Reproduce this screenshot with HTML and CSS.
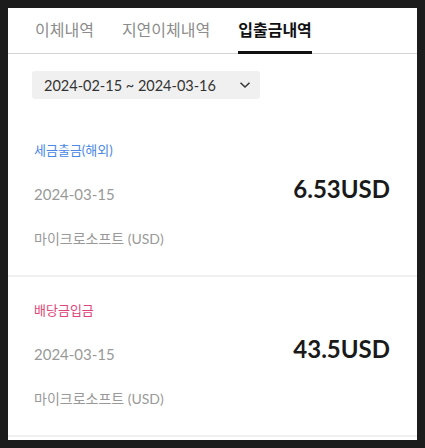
FILE: index.html
```html
<!DOCTYPE html>
<html lang="ko">
<head>
<meta charset="utf-8">
<link rel="stylesheet" href="styles.css">
</head>
<body>
<div class="panel">
  <nav class="tabs">
    <span class="tab">이체내역</span>
    <span class="tab">지연이체내역</span>
    <span class="tab active">입출금내역</span>
  </nav>
  <div class="filter">
    <button class="range">
      <span>2024-02-15 ~ 2024-03-16</span>
      <svg class="chev" width="12" height="8" viewBox="0 0 12 8"><path d="M1.5 1.8l4.5 4.2 4.5-4.2" fill="none" stroke="#333" stroke-width="1.5"/></svg>
    </button>
  </div>
  <div class="card">
    <div class="type out">세금출금(해외)</div>
    <div class="row">
      <span class="date">2024-03-15</span>
      <span class="amount">6.53USD</span>
    </div>
    <div class="name">마이크로소프트 (USD)</div>
  </div>
  <div class="card">
    <div class="type in">배당금입금</div>
    <div class="row">
      <span class="date">2024-03-15</span>
      <span class="amount">43.5USD</span>
    </div>
    <div class="name">마이크로소프트 (USD)</div>
  </div>
</div>
</body>
</html>
```
FILE: styles.css
```css
html, body {
  margin: 0;
  background: #1c1c1c;
}
body {
  padding: 8px;
  font-family: "Lato", "Noto Sans CJK KR", sans-serif;
}
.panel {
  background: #fff;
  height: 432px;
  overflow: hidden;
}
.tabs {
  display: flex;
  gap: 28px;
  padding-left: 27px;
  height: 45px;
  border-bottom: 1px solid #d4d4d4;
}
.tab {
  box-sizing: border-box;
  height: 46px;
  padding-top: 11px;
  font-size: 16px;
  line-height: 22px;
  color: #8c8c8c;
  border-bottom: 3px solid transparent;
}
.tab.active {
  color: #111;
  font-weight: 700;
  border-bottom-color: #111;
}
.filter {
  padding: 17px 0 18px 24px;
}
.range {
  box-sizing: border-box;
  width: 228px;
  height: 28px;
  display: flex;
  align-items: center;
  justify-content: space-between;
  padding: 0 9px 0 12px;
  border: 0;
  border-radius: 3px;
  background: #f0f0f0;
  font-family: inherit;
  font-size: 14.5px;
  color: #333;
}
.chev {
  display: block;
}
.card {
  padding: 24px 27px 26px 26px;
  border-bottom: 2px solid #f0f0f0;
}
.type {
  font-size: 13px;
  line-height: 18px;
}
.type.out { color: #4a88e6; }
.type.in { color: #e0467a; }
.row {
  display: flex;
  justify-content: space-between;
  align-items: center;
  margin-top: 15px;
}
.date {
  font-size: 15px;
  line-height: 22px;
  color: #999;
}
.amount {
  font-size: 24px;
  line-height: 30px;
  font-weight: 700;
  color: #1a1a1a;
  margin-bottom: 10px;
}
.name {
  margin-top: 15px;
  font-size: 14px;
  line-height: 20px;
  color: #999;
}
```
